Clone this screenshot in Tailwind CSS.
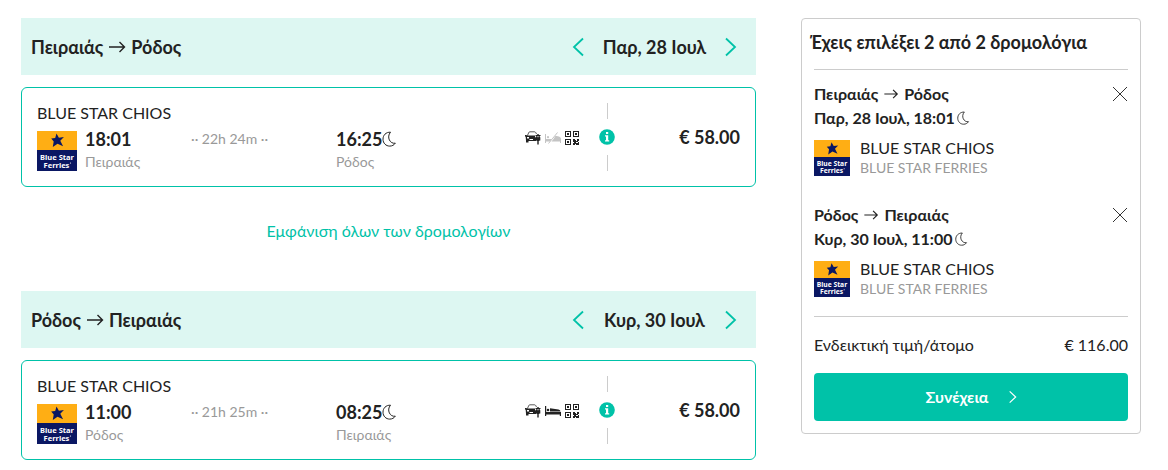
<!DOCTYPE html>
<html lang="el">
<head>
<meta charset="utf-8">
<meta name="viewport" content="width=device-width, initial-scale=1">
<title>Πειραιάς – Ρόδος</title>
<script src="https://cdn.jsdelivr.net/npm/@tailwindcss/browser@4"></script>
</head>
<body class="bg-white font-['Lato','Open_Sans',sans-serif] text-base text-[#222]">
<svg class="hidden" aria-hidden="true">
  <symbol id="arrow" viewBox="0 0 18 12"><path d="M1 6h15.500M11.500 1l5 5-5 5" fill="none" stroke="currentColor" stroke-width="1.400"/></symbol>
  <symbol id="moon" viewBox="0 0 14 16"><path d="M8.500 1.200C3.800 1 1 4.300 1 8.200c0 4 3 6.900 6.700 6.900 2.400 0 4.300-1 5.600-2.900C8 13.200 4.300 6 8.500 1.200z" fill="none" stroke="currentColor" stroke-width="1" stroke-linejoin="round"/></symbol>
  <symbol id="left" viewBox="0 0 12 20"><path d="M11 1.500L2 10l9 8.500" fill="none" stroke="currentColor" stroke-width="1.800"/></symbol>
  <symbol id="right" viewBox="0 0 12 20"><path d="M1 1.500L10 10l-9 8.500" fill="none" stroke="currentColor" stroke-width="1.800"/></symbol>
  <symbol id="close" viewBox="0 0 16 16"><path d="M1 1l14 14M15 1L1 15" fill="none" stroke="currentColor" stroke-width="1"/></symbol>
  <symbol id="logo" viewBox="0 0 40 40">
    <path fill="#ffae14" d="M0 0h40v20H0z"/><path fill="#0a1763" d="M0 19h40v21H0z"/>
    <path fill="#0a1763" d="M19.500 2.500l2.400 4.200 5-.6-3.600 3.700 2.800 5.400-5.600-2.500-4.700 3.300.9-5.600-2.500-2.900 4-.5z"/>
    <text x="20" y="29" fill="#fff" font-family="Noto Sans, sans-serif" font-size="7.500" font-weight="700" text-anchor="middle">Blue Star</text>
    <text x="19.500" y="36.500" fill="#fff" font-family="Noto Sans, sans-serif" font-size="7.500" font-weight="700" text-anchor="middle">Ferries</text>
    <circle cx="33.500" cy="32" r=".6" fill="#fff"/>
  </symbol>
  <symbol id="car" viewBox="0 0 16 14">
    <path d="M2.300 4.800L3.800 1.500Q4 .8 5 .8h4.500q.8 0 1.200.7l.8 1.500" fill="none" stroke="currentColor" stroke-opacity=".75" stroke-width="1"/>
    <path fill="currentColor" fill-rule="evenodd" d="M0 4h1.500l.3.500H10v1l1 1.500v3H3.500v1.500H1V9.500L.7 6 0 5.200zM2 6v1.600h2V6zM4.500 8v1H8V8z"/>
    <path fill="currentColor" fill-rule="evenodd" d="M10.500 4h1.300l.4-.8h1.600l.4.800h1.300v1h-1l.8 1.500v3h-1V10h-.6v3.500h-1.400V10h-.6v-.5h-1v-3l.8-1.500h-1zM12.500 5v1.200h1V5z"/>
  </symbol>
  <symbol id="bed" viewBox="0 0 16 12"><path fill="currentColor" d="M0 1h1.200v6H16v4h-1.200V9.500H1.200V11H0z"/><circle cx="3" cy="5" r="1.300" fill="currentColor"/><path fill="currentColor" d="M5 3.300l8.500 1.200Q15.500 5 15.500 6.500H5z"/></symbol>
  <symbol id="nobed" viewBox="0 0 16 12"><path fill="currentColor" d="M0 2h1v5h6L5 9.500H1V11H0zM10.500 3.800l3.500.7q2 .5 2 2.500v4h-1V9.500H6.500l2-2.500z"/><circle cx="3" cy="5.200" r="1.100" fill="currentColor"/><path d="M3.500 11.500l9-11" stroke="currentColor" stroke-width="1"/></symbol>
  <symbol id="qr" viewBox="0 0 14 14"><path fill="currentColor" fill-rule="evenodd" d="M0 0h6v6H0zM1 1v4h4V1zM2 2h2v2H2zM8 0h6v6H8zM9 1v4h4V1zM10 2h2v2h-2zM0 8h6v6H0zM1 9v4h4V9zM2 10h2v2H2zM8 8h2v1h1v1h1V8h2v2h-1v1h-2v1h1v2h-1v-1h-1v1H8v-2h1v-1H8zM12 12h1v-1h1v3h-2z"/></symbol>
  <symbol id="info" viewBox="0 0 16 16"><circle cx="8" cy="8" r="7.800" fill="#00c2a8"/><path fill="#fff" d="M7 3h2.200v2H7zM6 6.300h3.200v4.900h1V12.500H6v-1.300h1V7.500H6z"/></symbol>
</svg>

<div class="flex items-start gap-[45px] py-[18px] pr-[27px] pl-[21px]">
  <main class="min-w-0 flex-1">
    <section>
      <header class="flex h-[57px] items-center justify-between bg-[#ddf7f2] pr-[19px] pl-[10px] text-lg font-bold">
        <h2 class="flex items-center gap-[5px]">Πειραιάς <svg class="h-3 w-[18px]"><use href="#arrow"/></svg> Ρόδος</h2>
        <div class="flex items-center">
          <button type="button" aria-label="Προηγούμενη ημέρα" class="text-[#00c2a8]"><svg class="h-5 w-3"><use href="#left"/></svg></button>
          <span class="w-[141px] text-center">Παρ, 28 Ιουλ</span>
          <button type="button" aria-label="Επόμενη ημέρα" class="text-[#00c2a8]"><svg class="h-5 w-3"><use href="#right"/></svg></button>
        </div>
      </header>
      <article class="mt-3 flex h-[100px] items-center rounded-md border border-[#00c2a8] px-[15px]">
        <div class="min-w-0 flex-1">
          <h3 class="mb-1 leading-6">BLUE STAR CHIOS</h3>
          <div class="flex h-11 gap-2">
            <svg class="mt-0.5 size-10 shrink-0" role="img" aria-label="Blue Star Ferries"><use href="#logo"/></svg>
            <div class="flex min-w-0 flex-1">
              <div class="w-[106px]"><p class="text-lg/5 font-bold">18:01</p><p class="mt-[3px] text-sm/5 text-[#999]">Πειραιάς</p></div>
              <p class="w-[145px] text-sm/5 text-[#999]">·· 22h 24m ··</p>
              <div><p class="flex items-center text-lg/5 font-bold">16:25<svg class="h-4 w-[14px]"><use href="#moon"/></svg></p><p class="mt-[3px] text-sm/5 text-[#999]">Ρόδος</p></div>
            </div>
          </div>
        </div>
        <div class="flex items-center gap-1 pt-0.5 text-[#222]">
          <svg class="h-[14px] w-4"><use href="#car"/></svg>
          <svg class="h-3 w-4 text-[#c4c4c4]"><use href="#nobed"/></svg>
          <svg class="size-[14px]"><use href="#qr"/></svg>
        </div>
        <div class="ml-5 flex flex-col items-center gap-[10px]">
          <span class="h-4 w-px bg-[#ccc]"></span>
          <button type="button" aria-label="Πληροφορίες"><svg class="block size-4"><use href="#info"/></svg></button>
          <span class="h-4 w-px bg-[#ccc]"></span>
        </div>
        <p class="w-[125px] text-right text-lg font-bold">€ 58.00</p>
      </article>
    </section>

    <div class="flex h-[104px] items-center justify-center pb-4">
      <a href="#all" class="text-[#00c2a8]">Εμφάνιση όλων των δρομολογίων</a>
    </div>

    <section>
      <header class="flex h-[57px] items-center justify-between bg-[#ddf7f2] pr-[19px] pl-[10px] text-lg font-bold">
        <h2 class="flex items-center gap-[5px]">Ρόδος <svg class="h-3 w-[18px]"><use href="#arrow"/></svg> Πειραιάς</h2>
        <div class="flex items-center">
          <button type="button" aria-label="Προηγούμενη ημέρα" class="text-[#00c2a8]"><svg class="h-5 w-3"><use href="#left"/></svg></button>
          <span class="w-[141px] text-center">Κυρ, 30 Ιουλ</span>
          <button type="button" aria-label="Επόμενη ημέρα" class="text-[#00c2a8]"><svg class="h-5 w-3"><use href="#right"/></svg></button>
        </div>
      </header>
      <article class="mt-3 flex h-[100px] items-center rounded-md border border-[#00c2a8] px-[15px]">
        <div class="min-w-0 flex-1">
          <h3 class="mb-1 leading-6">BLUE STAR CHIOS</h3>
          <div class="flex h-11 gap-2">
            <svg class="mt-0.5 size-10 shrink-0" role="img" aria-label="Blue Star Ferries"><use href="#logo"/></svg>
            <div class="flex min-w-0 flex-1">
              <div class="w-[106px]"><p class="text-lg/5 font-bold">11:00</p><p class="mt-[3px] text-sm/5 text-[#999]">Ρόδος</p></div>
              <p class="w-[145px] text-sm/5 text-[#999]">·· 21h 25m ··</p>
              <div><p class="flex items-center text-lg/5 font-bold">08:25<svg class="h-4 w-[14px]"><use href="#moon"/></svg></p><p class="mt-[3px] text-sm/5 text-[#999]">Πειραιάς</p></div>
            </div>
          </div>
        </div>
        <div class="flex items-center gap-1 pt-0.5 text-[#222]">
          <svg class="h-[14px] w-4"><use href="#car"/></svg>
          <svg class="h-3 w-4"><use href="#bed"/></svg>
          <svg class="size-[14px]"><use href="#qr"/></svg>
        </div>
        <div class="ml-5 flex flex-col items-center gap-[10px]">
          <span class="h-4 w-px bg-[#ccc]"></span>
          <button type="button" aria-label="Πληροφορίες"><svg class="block size-4"><use href="#info"/></svg></button>
          <span class="h-4 w-px bg-[#ccc]"></span>
        </div>
        <p class="w-[125px] text-right text-lg font-bold">€ 58.00</p>
      </article>
    </section>
  </main>

  <aside class="w-[340px] shrink-0 rounded border border-[#ccc] px-3 pb-3">
    <h2 class="-ml-1 pt-1.5 pb-2.5 text-lg/[34px] font-bold whitespace-nowrap">Έχεις επιλέξει 2 από 2 δρομολόγια</h2>
    <ul class="border-y border-[#ccc]">
      <li class="pt-3">
        <div class="flex justify-between font-bold">
          <div class="leading-6">
            <p class="flex items-center gap-[5px]">Πειραιάς <svg class="h-[10px] w-4"><use href="#arrow"/></svg> Ρόδος</p>
            <p class="flex items-center">Παρ, 28 Ιουλ, 18:01 <svg class="h-[14px] w-4"><use href="#moon"/></svg></p>
          </div>
          <button type="button" aria-label="Αφαίρεση" class="flex h-6 items-center text-[#333]"><svg class="size-4"><use href="#close"/></svg></button>
        </div>
        <div class="mt-2 flex items-center gap-[10px]">
          <svg class="size-9" viewBox="0 0 40 40" role="img" aria-label="Blue Star Ferries"><use href="#logo"/></svg>
          <div><p class="leading-5">BLUE STAR CHIOS</p><p class="text-sm/5 text-[#999]">BLUE STAR FERRIES</p></div>
        </div>
      </li>
      <li class="pt-[25px] pb-[17px]">
        <div class="flex justify-between font-bold">
          <div class="leading-6">
            <p class="flex items-center gap-[5px]">Ρόδος <svg class="h-[10px] w-4"><use href="#arrow"/></svg> Πειραιάς</p>
            <p class="flex items-center">Κυρ, 30 Ιουλ, 11:00 <svg class="h-[14px] w-4"><use href="#moon"/></svg></p>
          </div>
          <button type="button" aria-label="Αφαίρεση" class="flex h-6 items-center text-[#333]"><svg class="size-4"><use href="#close"/></svg></button>
        </div>
        <div class="mt-2 flex items-center gap-[10px]">
          <svg class="size-9" viewBox="0 0 40 40" role="img" aria-label="Blue Star Ferries"><use href="#logo"/></svg>
          <div><p class="leading-5">BLUE STAR CHIOS</p><p class="text-sm/5 text-[#999]">BLUE STAR FERRIES</p></div>
        </div>
      </li>
    </ul>
    <div class="flex h-14 items-center justify-between"><span>Ενδεικτική τιμή/άτομο</span><span>€ 116.00</span></div>
    <button type="button" class="flex h-12 w-full items-center justify-center gap-5 rounded bg-[#00c2a8] font-bold text-white">Συνέχεια <svg class="h-[14px] w-2"><use href="#right"/></svg></button>
  </aside>
</div>
</body>
</html>
